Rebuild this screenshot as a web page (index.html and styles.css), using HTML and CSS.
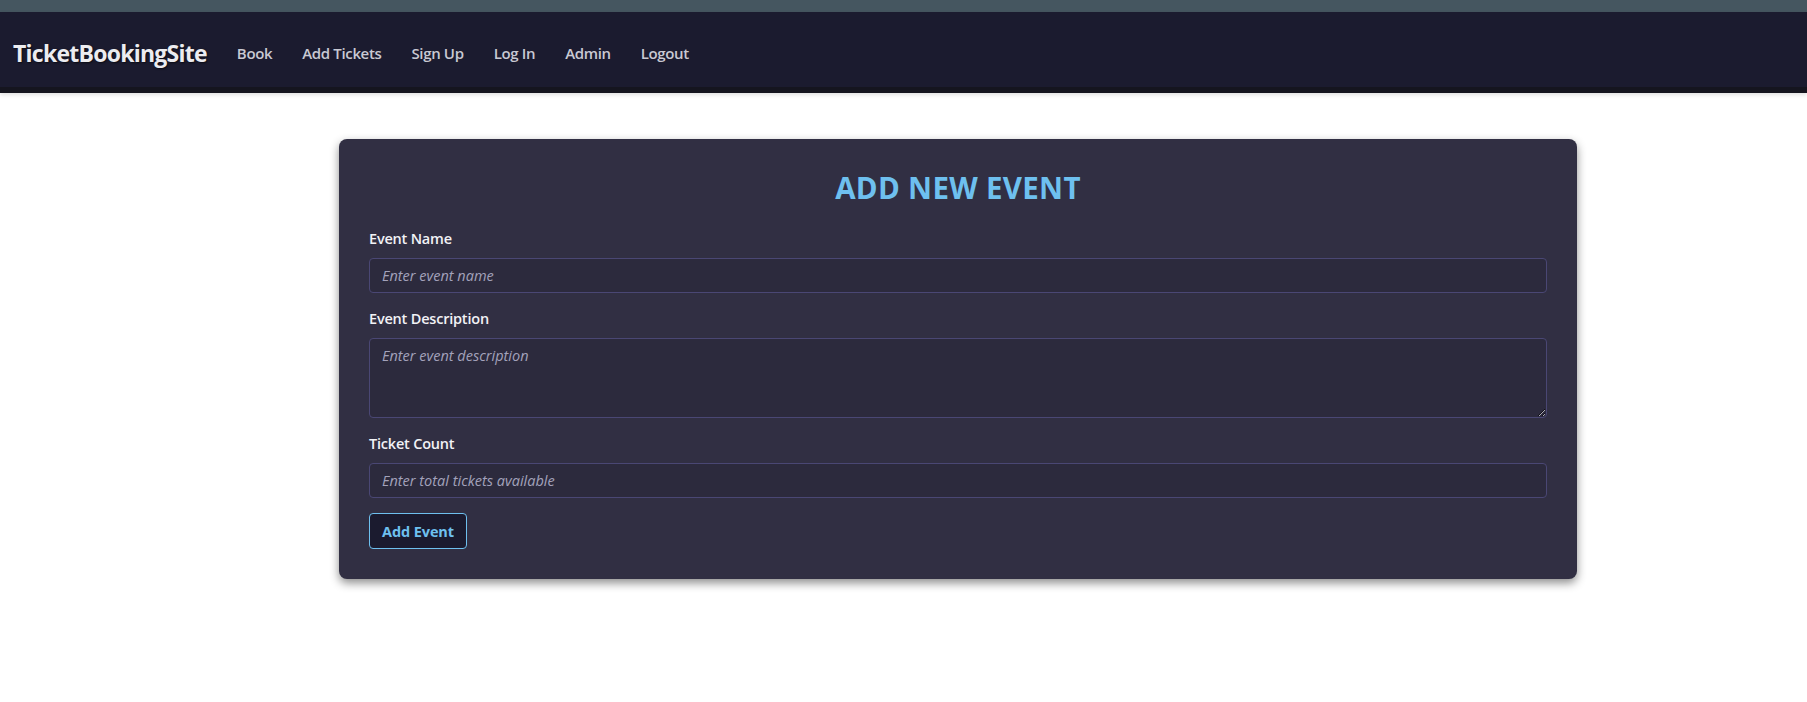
FILE: index.html
```html
<!DOCTYPE html>
<html lang="en">
<head>
<meta charset="utf-8">
<title>TicketBookingSite - Add Event</title>
<link rel="stylesheet" href="styles.css">
</head>
<body>
<div class="topstrip"></div>
<nav class="navbar">
  <a class="brand" href="#">TicketBookingSite</a>
  <ul class="nav-links">
    <li><a href="#">Book</a></li>
    <li><a href="#">Add Tickets</a></li>
    <li><a href="#">Sign Up</a></li>
    <li><a href="#">Log In</a></li>
    <li><a href="#">Admin</a></li>
    <li><a href="#">Logout</a></li>
  </ul>
</nav>
<main class="page">
  <form class="card">
    <h2 class="card-title">ADD NEW EVENT</h2>
    <div class="field">
      <label for="name">Event Name</label>
      <input id="name" type="text" placeholder="Enter event name">
    </div>
    <div class="field">
      <label for="desc">Event Description</label>
      <textarea id="desc" placeholder="Enter event description"></textarea>
    </div>
    <div class="field">
      <label for="count">Ticket Count</label>
      <input id="count" type="text" placeholder="Enter total tickets available">
    </div>
    <button type="button" class="btn">Add Event</button>
  </form>
</main>
</body>
</html>
```

FILE: styles.css
```css
* { box-sizing: border-box; }

body {
  margin: 0;
  background: #ffffff;
  font-family: "Open Sans", "Noto Sans", sans-serif;
}

.topstrip {
  height: 12px;
  background: #455660;
}

.navbar {
  height: 81px;
  background: #1b1b2f;
  border-bottom: 6px solid #15151f;
  box-shadow: 0 2px 4px rgba(0, 0, 0, 0.12);
  display: flex;
  align-items: center;
  padding: 7px 0 0 13px;
}

.brand {
  color: #ececf0;
  font-weight: 700;
  font-size: 23px;
  text-decoration: none;
  letter-spacing: -0.75px;
  text-shadow: 1px 1px 2px rgba(0, 0, 0, 0.6);
}

.nav-links {
  list-style: none;
  margin: 0 0 0 30px;
  padding: 0;
  display: flex;
  gap: 30px;
}

.nav-links a {
  color: #c9c9d3;
  text-decoration: none;
  font-size: 15px;
  font-weight: 600;
  letter-spacing: -0.35px;
}

.page {
  padding: 46px 0 40px 339px;
}

.card {
  width: 1238px;
  background: #312f43;
  border-radius: 8px;
  box-shadow: 0 4px 10px rgba(0, 0, 0, 0.45);
  padding: 30px;
  display: flex;
  flex-direction: column;
  align-items: flex-start;
}

.card-title {
  align-self: stretch;
  text-align: center;
  margin: 1px 0 23px;
  font-size: 29.5px;
  line-height: 36px;
  font-weight: 700;
  color: #6ec0ef;
  letter-spacing: 0.3px;
}

.field {
  align-self: stretch;
  display: flex;
  flex-direction: column;
  margin-bottom: 16px;
}

.field label {
  color: #f2f2f6;
  font-size: 14.5px;
  line-height: 20px;
  font-weight: 600;
  margin-bottom: 9px;
  letter-spacing: -0.2px;
}

.field input,
.field textarea {
  width: 100%;
  background: #2c2a3d;
  border: 1px solid #4a4774;
  border-radius: 4px;
  color: #e0e0ea;
  font-family: inherit;
  font-size: 14.5px;
  padding: 0 12px;
  outline: none;
}

.field input {
  height: 35px;
}

.field textarea {
  height: 80px;
  padding-top: 7px;
  resize: vertical;
}

.field input::placeholder,
.field textarea::placeholder {
  color: #a3a2bb;
  font-style: italic;
}

.btn {
  margin-top: -1px;
  height: 36px;
  padding: 0 12px;
  background: #1b1b2f;
  border: 1px solid #6ec0ef;
  border-radius: 4px;
  color: #6ec0ef;
  font-family: inherit;
  font-size: 14.5px;
  font-weight: 700;
  letter-spacing: -0.1px;
}
```
